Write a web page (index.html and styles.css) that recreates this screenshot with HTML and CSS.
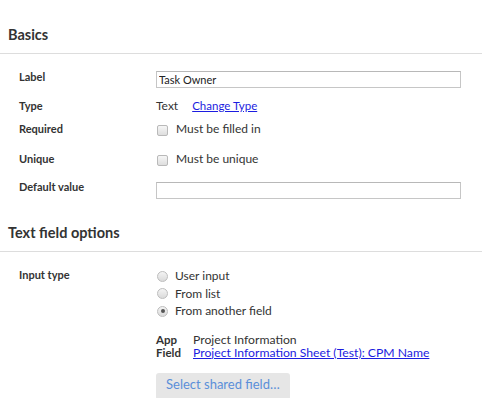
FILE: index.html
```html
<!DOCTYPE html>
<html>
<head>
<meta charset="utf-8">
<link rel="stylesheet" href="styles.css">
</head>
<body>
<div class="page">
  <section class="sec sec-basics">
    <h2 class="sec-title">Basics</h2>
    <div class="form-grid basics-grid">
      <div class="lbl">Label</div>
      <div class="val"><input class="txt" type="text" value="Task Owner"></div>

      <div class="lbl">Type</div>
      <div class="val"><span class="type-name">Text</span><a class="link link-small" href="#">Change Type</a></div>

      <div class="lbl">Required</div>
      <div class="val"><label class="check"><span class="cb"></span>Must be filled in</label></div>

      <div class="lbl">Unique</div>
      <div class="val"><label class="check"><span class="cb"></span>Must be unique</label></div>

      <div class="lbl">Default value</div>
      <div class="val"><input class="txt txt-default" type="text" value=""></div>
    </div>
  </section>

  <section class="sec sec-options">
    <h2 class="sec-title">Text field options</h2>
    <div class="form-grid">
      <div class="lbl">Input type</div>
      <div class="val">
        <div class="radios">
          <label class="radio"><span class="rb"></span>User input</label>
          <label class="radio"><span class="rb"></span>From list</label>
          <label class="radio"><span class="rb rb-on"></span>From another field</label>
        </div>
        <div class="source">
          <div class="src-key">App</div>
          <div class="src-val">Project Information</div>
          <div class="src-key">Field</div>
          <div class="src-val"><a class="link" href="#">Project Information Sheet (Test): CPM Name</a></div>
        </div>
        <button class="btn" type="button">Select shared field…</button>
      </div>
    </div>
  </section>
</div>
</body>
</html>
```

FILE: styles.css
```css
html, body {
  margin: 0;
  padding: 0;
  background: #ffffff;
}

body {
  font-family: Lato, "Open Sans", "Liberation Sans", sans-serif;
  color: #333333;
  font-size: 12px;
  line-height: 16px;
}

.page {
  width: 482px;
}

.sec-basics {
  margin-top: 27px;
}

.sec-options {
  margin-top: 26px;
}

.sec-title {
  margin: 0;
  padding: 0 8px 10px;
  font-size: 14.5px;
  line-height: 16px;
  font-weight: 700;
  color: #333333;
  border-bottom: 1px solid #dddddd;
}

.form-grid {
  display: grid;
  grid-template-columns: 137px 305px;
  padding: 15px 0 0 19px;
}

.basics-grid {
  grid-template-rows: 28.5px 23.5px 30px 28px auto;
}

.lbl {
  font-size: 11px;
  font-weight: 700;
  line-height: 16px;
  color: #333333;
}

.val {
  font-size: 12px;
  line-height: 16px;
  color: #333333;
}

.txt {
  display: block;
  box-sizing: border-box;
  width: 305px;
  height: 17px;
  margin: 2px 0 0;
  padding: 0 2px;
  border: 1px solid #c6c6c6;
  border-top-color: #b8b8b8;
  border-radius: 0;
  font-family: Lato, "Open Sans", "Liberation Sans", sans-serif;
  font-size: 11px;
  color: #222222;
  background: #ffffff;
  outline: none;
}

.txt-default {
  margin-top: 3px;
}

.type-name {
  margin-right: 14px;
}

.link {
  color: #1c1ce0;
  text-decoration: underline;
}

.link-small {
  font-size: 11.5px;
}

.check,
.radio {
  display: flex;
  align-items: center;
}

.cb {
  box-sizing: border-box;
  width: 11px;
  height: 11px;
  margin: 2px 8px 0 1px;
  border: 1px solid #b9b9b9;
  border-radius: 2px;
  background: linear-gradient(#f6f6f6, #dedede);
}

.radios {
  display: flex;
  flex-direction: column;
}

.radio {
  line-height: 17.5px;
}

.rb {
  box-sizing: border-box;
  position: relative;
  width: 11px;
  height: 11px;
  margin: 1px 7px 0 1px;
  border: 1px solid #bdbdbd;
  border-radius: 50%;
  background: linear-gradient(#f4f4f4, #dadada);
}

.rb-on::after {
  content: "";
  position: absolute;
  left: 2.5px;
  top: 2.5px;
  width: 4px;
  height: 4px;
  border-radius: 50%;
  background: #555555;
}

.source {
  display: grid;
  grid-template-columns: 37px auto;
  margin-top: 13px;
  line-height: 13px;
}

.src-key {
  font-size: 11.5px;
  font-weight: 700;
  color: #333333;
}

.src-val {
  font-size: 12.2px;
  color: #333333;
}

.btn {
  display: block;
  margin-top: 14px;
  padding: 4px 10px 9px;
  border: none;
  border-radius: 3px;
  background: #e6e6e6;
  color: #5b8fd9;
  font-family: Lato, "Open Sans", "Liberation Sans", sans-serif;
  font-size: 13px;
  line-height: 14px;
}
```
